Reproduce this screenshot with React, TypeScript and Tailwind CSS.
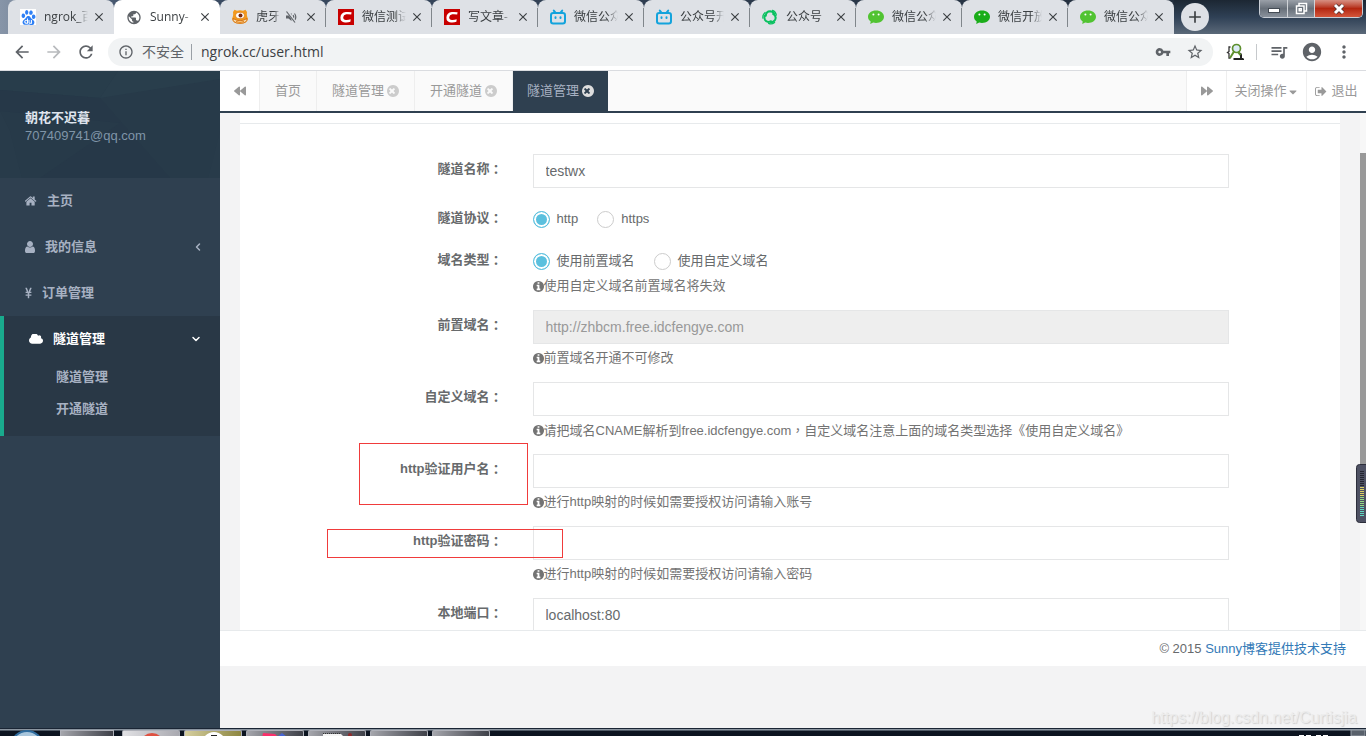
import { useState, type ReactNode } from 'react';
import {
  MdArrowBack,
  MdArrowForward,
  MdRefresh,
  MdInfoOutline,
  MdVpnKey,
  MdStarBorder,
  MdQueueMusic,
  MdAccountCircle,
  MdMoreVert,
  MdClose,
  MdAdd,
  MdPublic,
} from 'react-icons/md';
import { FaBackward, FaCaretDown, FaForward, FaYenSign } from 'react-icons/fa';
import { ChevronDown, ChevronLeft } from 'lucide-react';
import { SiBaidu } from 'react-icons/si';

/* ---------- icons ---------- */

const HOME =
  'M1408 992v480q0 26-19 45t-45 19h-384v-384h-256v384h-384q-26 0-45-19t-19-45v-480q0-1 .5-3t.5-3l575-474 575 474q1 2 1 6zm223-69l-62 74q-8 9-21 11h-3q-13 0-21-7l-692-577-692 577q-12 8-24 7-13-2-21-11l-62-74q-8-10-7-23.5t11-21.5l719-599q32-26 76-26t76 26l244 204v-195q0-14 9-23t23-9h192q14 0 23 9t9 23v408l219 182q10 8 11 21.5t-7 23.5z';
const USER =
  'M1536 1399q0 109-62.5 187t-150.5 78h-854q-88 0-150.5-78t-62.5-187q0-85 8.5-160.5t31.5-152 58.5-131 94-89 134.5-34.5q131 128 313 128t313-128q76 0 134.5 34.5t94 89 58.5 131 31.5 152 8.5 160.5zm-256-887q0 159-112.5 271.5t-271.5 112.5-271.5-112.5-112.5-271.5 112.5-271.5 271.5-112.5 271.5 112.5 112.5 271.5z';
const CLOUD =
  'M1984 1152q0 159-112.5 271.5t-271.5 112.5h-1088q-185 0-316.5-131.5t-131.5-316.5q0-132 71-241.5t187-163.5q-2-28-2-43 0-212 150-362t362-150q158 0 286.5 88t187.5 230q70-62 166-62 106 0 181 75t75 181q0 75-41 138 129 30 213 134.5t84 239.5z';
const INFO =
  'M1152 1376v-160q0-14-9-23t-23-9h-96v-512q0-14-9-23t-23-9h-320q-14 0-23 9t-9 23v160q0 14 9 23t23 9h96v320h-96q-14 0-23 9t-9 23v160q0 14 9 23t23 9h448q14 0 23-9t9-23zm-128-896v-160q0-14-9-23t-23-9h-192q-14 0-23 9t-9 23v160q0 14 9 23t23 9h192q14 0 23-9t9-23zm640 416q0 209-103 385.5t-279.5 279.5-385.5 103-385.5-103-279.5-279.5-103-385.5 103-385.5 279.5-279.5 385.5-103 385.5 103 279.5 279.5 103 385.5z';
const SIGN_OUT =
  'M704 1440q0 4 1 20t.5 26.5-3 23.5-10 19.5-20.5 6.5h-320q-119 0-203.5-84.5t-84.5-203.5v-704q0-119 84.5-203.5t203.5-84.5h320q13 0 22.5 9.5t9.5 22.5q0 4 1 20t.5 26.5-3 23.5-10 19.5-20.5 6.5h-320q-66 0-113 47t-47 113v704q0 66 47 113t113 47h312l11.5 1 11.5 3 8 5.5 7 9 2 13.5zm928-544q0 26-19 45l-544 544q-19 19-45 19t-45-19-19-45v-288h-448q-26 0-45-19t-19-45v-384q0-26 19-45t45-19h448v-288q0-26 19-45t45-19 45 19l544 544q19 19 19 45z';
const TIMES_CIRCLE =
  'M1149 1122q0-26-19-45l-181-181 181-181q19-19 19-45 0-27-19-46l-90-90q-19-19-46-19-26 0-45 19l-181 181-181-181q-19-19-45-19-27 0-46 19l-90 90q-19 19-19 46 0 26 19 45l181 181-181 181q-19 19-19 45 0 27 19 46l90 90q19 19 46 19 26 0 45-19l181-181 181 181q19 19 45 19 27 0 46-19l90-90q19-19 19-46zm515-226q0 209-103 385.5t-279.5 279.5-385.5 103-385.5-103-279.5-279.5-103-385.5 103-385.5 279.5-279.5 385.5-103 385.5 103 279.5 279.5 103 385.5z';

function Glyph({ d, box, className }: { d: string; box: string; className: string }) {
  return (
    <svg viewBox={box} className={className} fill="currentColor" aria-hidden="true">
      <path d={d} />
    </svg>
  );
}

function CsdnIcon() {
  return (
    <svg viewBox="0 0 16 16" className="size-4">
      <rect width="16" height="16" fill="#c80000" />
      <path d="M13.6 3.2 13.2 5.6Q10.500 5 8.200 5.300 5.400 5.800 5.200 8.300 5.200 10.900 8 11 10.500 11.100 12.700 10.300L12.400 12.800Q10 13.600 7 13.400 2.300 12.900 2.400 8.400 2.700 3.600 7.800 3 10.800 2.700 13.600 3.200Z" fill="#fff" />
    </svg>
  );
}

function RobotIcon() {
  return (
    <svg viewBox="0 0 16 16" className="size-4" fill="none" stroke="#13a3dc" strokeWidth="2" strokeLinecap="round">
      <rect x="1" y="4" width="14" height="10.500" rx="2.200" />
      <path d="M3.800 1.600 5.400 3.600M12.200 1.600 10.600 3.600M5.500 8.200v.8M10.500 8.200v.8" />
    </svg>
  );
}

function SwirlIcon() {
  return (
    <svg viewBox="0 0 16 16" className="size-4" fill="none" stroke="#0ac160" strokeWidth="2" strokeLinecap="round">
      {[0, 120, 240].map((angle) => (
        <g key={angle} transform={`rotate(${angle} 8 8)`}>
          <path d="M3.800 6.800Q4 2.200 8.200 2.200 10.800 2.400 12 4.600" />
          <path d="M10.500 1.300Q13.800 2.600 14.300 6" strokeWidth="1.300" />
        </g>
      ))}
    </svg>
  );
}

function ChatIcon({ color }: { color: string }) {
  return (
    <svg viewBox="0 0 16 16" className="size-4">
      <path d="M8 1.500c4.500 0 8 2.700 8 6.200s-3.500 6.200-8 6.200c-1 0-1.900-.1-2.800-.4L2.200 15l.5-2.500C1 11.300 0 9.600 0 7.700 0 4.200 3.500 1.500 8 1.500Z" fill={color} />
      <circle cx="5.400" cy="5.600" r="1" fill="#fff" />
      <circle cx="10.600" cy="5.600" r="1" fill="#fff" />
    </svg>
  );
}

function TigerIcon() {
  return (
    <svg viewBox="0 0 16 16" className="size-4">
      <path d="M1 3 2.500.8 5 1.800Q8 .8 11 1.800L13.500.8 15 3Q14.600 5 15 7L16 10Q15 14.800 8 15 1 14.800 0 10L1 7Q1.400 5 1 3Z" fill="#f39a1e" />
      <path d="M1 9.500q7 4.500 14 0 .3 4.700-7 4.700T1 9.500Z" fill="#fbe3b4" stroke="#c9650f" strokeWidth=".8" />
      <ellipse cx="8" cy="6.500" rx="4.400" ry="3.200" fill="#fff" stroke="#d9780f" strokeWidth=".7" />
      <circle cx="8.500" cy="6.400" r="2" fill="#7a2a10" />
      <path d="M4 12.500q4 1.800 8 0" stroke="#e8820f" fill="none" />
    </svg>
  );
}

function MutedIcon() {
  return (
    <svg viewBox="0 0 12 12" className="ml-[5px] size-3 shrink-0" fill="none" stroke="#5f6368" strokeWidth="1.200">
      <path d="M1 4.500h2.500L6.500 2v8L3.500 7.500H1z" fill="#5f6368" stroke="none" />
      <path d="M8 4.200q1.400 1.800 0 3.600M9.500 2.500q2.600 3.500 0 7" />
      <path d="M2.500.500 10.500 11.500" stroke="#dee1e6" strokeWidth="2.400" />
      <path d="M1.500.500 10 11.500" />
    </svg>
  );
}

function BaiduIcon() {
  return (
    <span className="flex size-4 items-center justify-center bg-white text-[#2f80f5]">
      <SiBaidu className="size-[15px]" />
    </span>
  );
}

/* ---------- browser chrome ---------- */

type BrowserTab = { title: string; icon: ReactNode; active?: boolean; muted?: boolean };

const browserTabs: BrowserTab[] = [
  { title: 'ngrok_百', icon: <BaiduIcon /> },
  { title: 'Sunny-', icon: <MdPublic className="size-[17px] text-[#5f6368]" />, active: true },
  { title: '虎牙', icon: <TigerIcon />, muted: true },
  { title: '微信测试', icon: <CsdnIcon /> },
  { title: '写文章-', icon: <CsdnIcon /> },
  { title: '微信公众', icon: <RobotIcon /> },
  { title: '公众号开', icon: <RobotIcon /> },
  { title: '公众号', icon: <SwirlIcon /> },
  { title: '微信公众', icon: <ChatIcon color="#51c332" /> },
  { title: '微信开放', icon: <ChatIcon color="#1aad19" /> },
  { title: '微信公众', icon: <ChatIcon color="#51c332" /> },
];

function TabStrip() {
  return (
    <div className="relative flex h-[34px] shrink-0 bg-linear-to-r from-[#8795a8] via-[#3c4d65] via-10% to-[#1d2835] pl-2">
      {browserTabs.map((tab, i) => (
        <div
          key={i}
          className={
            "relative flex w-[106px] shrink-0 items-center rounded-t-lg pr-2 pl-3 font-['Open_Sans','Noto_Sans_CJK_SC',sans-serif] text-xs text-[#3c4043] " +
            (tab.active ? 'bg-white' : 'bg-[#dee1e6]')
          }
        >
          <span className="flex w-4 shrink-0 justify-center">{tab.icon}</span>
          <span
            className={
              'ml-2 overflow-hidden whitespace-nowrap mask-r-from-75% ' + (tab.muted ? 'w-6' : 'w-[44px]')
            }
          >
            {tab.title}
          </span>
          {tab.muted && <MutedIcon />}
          <button type="button" aria-label="关闭标签页" className="ml-auto">
            <MdClose className="size-[14px] text-[#3c4043]" />
          </button>
          {i > 1 && i < browserTabs.length - 1 && (
            <span className="absolute top-2 right-0 h-[19px] w-px bg-[#80868b]" />
          )}
        </div>
      ))}
      <div className="flex flex-1 bg-linear-to-b from-[#1c2733] via-[#2f4055] to-[#5b6979] pt-[3px] pl-[7px]">
        <button
          type="button"
          aria-label="新标签页"
          className="flex size-7 items-center justify-center rounded-full bg-[#dee1e6]"
        >
          <MdAdd className="size-5 text-[#3c4043]" />
        </button>
      </div>
      <div className="absolute top-0 right-[3px] flex h-[18px] overflow-hidden rounded-b-[5px] border border-t-0 border-[#c9ced6] text-white">
        <button
          type="button"
          aria-label="最小化"
          className="flex w-7 items-end justify-center border-r border-[#d0d3d8] bg-linear-to-b from-[#9aa0a8] via-[#68707a] to-[#8a929c] pb-1"
        >
          <span className="h-[5px] w-3 border border-[#444c55] bg-white" />
        </button>
        <button
          type="button"
          aria-label="还原"
          className="flex w-[27px] items-center justify-center border-r border-[#d0d3d8] bg-linear-to-b from-[#9aa0a8] via-[#68707a] to-[#8a929c]"
        >
          <svg viewBox="0 0 13 13" className="size-[13px]" fill="#68707a" stroke="#fff" strokeWidth="1.500">
            <path d="M4 1.500h7.500V9H4z" />
            <path d="M1.500 4H9v7.500H1.500zM4.200 6.700h2v2h-2z" />
          </svg>
        </button>
        <button
          type="button"
          aria-label="关闭"
          className="flex w-[47px] items-center justify-center bg-linear-to-b from-[#d68f82] via-[#b3260f] to-[#d4553a]"
        >
          <svg viewBox="0 0 14 12" className="h-3 w-[14px]" fill="none">
            <path d="m3 2 8 8M11 2l-8 8" stroke="#4c3030" strokeWidth="4.500" />
            <path d="m3 2 8 8M11 2l-8 8" stroke="#fff" strokeWidth="3" />
          </svg>
        </button>
      </div>
    </div>
  );
}

function Toolbar() {
  return (
    <div className="flex h-[37px] shrink-0 items-center border-b border-[#dadce0] bg-white pr-3 pl-3 text-[#5f6368]">
      <button type="button" aria-label="后退" className="w-5">
        <MdArrowBack className="size-5" />
      </button>
      <button type="button" aria-label="前进" className="ml-3 w-5 text-[#b8babd]">
        <MdArrowForward className="size-5" />
      </button>
      <button type="button" aria-label="重新加载" className="ml-3 w-5">
        <MdRefresh className="size-5" />
      </button>
      <div className="ml-3 flex h-7 flex-1 items-center rounded-full bg-[#f1f3f4] pr-[9px] pl-[10px]">
        <MdInfoOutline className="size-4" />
        <span className="ml-2 text-sm whitespace-nowrap">不安全</span>
        <span className="mx-[7px] h-4 w-px bg-[#9aa0a6]" />
        <input
          aria-label="地址栏"
          defaultValue="ngrok.cc/user.html"
          className="min-w-0 flex-1 bg-transparent pl-[2px] font-['Open_Sans',sans-serif] text-sm text-[#3c4043] outline-none"
        />
        <MdVpnKey className="size-4" />
        <MdStarBorder className="ml-[15px] size-[18px]" />
      </div>
      <svg viewBox="0 0 18 18" className="ml-[13px] size-[18px]" fill="none">
        <path d="M4.500 4H3v4.500L1.500 9.500 3 10.500V15h1.500" stroke="#333" strokeWidth="1.300" />
        <path d="M13 10.500q2 0 2 1.800V15l1.500 1H7.500" stroke="#222" strokeWidth="2" />
        <circle cx="10.500" cy="5.500" r="4" fill="#dcebf7" stroke="#5d8f2d" strokeWidth="1.700" />
        <path d="m8 8.500-4 6.500M12 9l2.500 3" stroke="#5d8f2d" strokeWidth="2" />
      </svg>
      <span className="ml-3 h-4 w-px bg-[#c6c9cc]" />
      <MdQueueMusic className="ml-[12px] size-5" />
      <MdAccountCircle className="ml-[12px] size-[22px]" />
      <button type="button" aria-label="更多" className="ml-[11px]">
        <MdMoreVert className="size-5" />
      </button>
    </div>
  );
}

/* ---------- sidebar ---------- */

const menuRow = 'flex h-[46px] items-center gap-[10px] pr-4 pb-px pl-[25px] hover:text-white';

function Sidebar() {
  return (
    <aside className="flex w-[220px] shrink-0 flex-col bg-[#2f4050] font-semibold text-[#a7b1c2]">
      <div className="relative bg-[#273a49] pt-[38px] pb-[33px] pl-[25px] leading-[18px]">
        <svg viewBox="0 0 220 107" preserveAspectRatio="none" className="absolute inset-0 size-full" aria-hidden="true">
          <path d="M0 19 100 27 118 0H0z" fill="#283d4b" />
          <path d="M118 0 100 27 220 8V0z" fill="#293e4c" />
          <path d="M0 19 100 27 170 107H40L120 52 0 40z" fill="#263848" />
          <path d="M0 40 10 60 22 107H0zM220 60 208 107h12z" fill="#283b4a" />
        </svg>
        <div className="relative">
          <p className="font-bold text-[#dfe4ed]">朝花不迟暮</p>
          <p className="font-normal text-[#8095a8]">707409741@qq.com</p>
        </div>
      </div>
      <nav>
        <a href="#home" className={menuRow}>
          <Glyph d={HOME} box="64 0 1664 1792" className="h-[14px] w-3" />
          主页
        </a>
        <a href="#profile" className={menuRow}>
          <Glyph d={USER} box="256 128 1280 1536" className="h-3 w-[10px]" />
          我的信息
          <ChevronLeft className="ml-auto size-3" strokeWidth={3} />
        </a>
        <a href="#orders" className={menuRow}>
          <FaYenSign className="h-3 w-[7px]" preserveAspectRatio="none" />
          订单管理
        </a>
        <div className="border-l-4 border-[#19aa8d] bg-[#293846] pb-[11px]">
          <a href="#tunnels" className="flex h-[45px] items-center gap-[10px] pr-[18px] pl-[25px] text-white">
            <Glyph d={CLOUD} box="64 256 1920 1280" className="h-[10px] w-[14px]" />
            隧道管理
            <ChevronDown className="ml-auto size-3" strokeWidth={3} />
          </a>
          <a href="#tunnel-list" className="flex h-8 items-center pl-[52px]">
            隧道管理
          </a>
          <a href="#tunnel-new" className="flex h-8 items-center pl-[52px]">
            开通隧道
          </a>
        </div>
      </nav>
    </aside>
  );
}

/* ---------- page tabs ---------- */

const pageTabs = [
  { title: '首页', closable: false, active: false },
  { title: '隧道管理', closable: true, active: false },
  { title: '开通隧道', closable: true, active: false },
  { title: '隧道管理', closable: true, active: true },
];

function PageTabs() {
  return (
    <div className="flex h-[42px] shrink-0 border-b-2 border-[#2f4050] bg-[#fafafa] text-[#999]">
      <button type="button" aria-label="向左滚动" className="flex w-10 items-center justify-center border-r border-[#eee] bg-white">
        <FaBackward className="size-3" />
      </button>
      {pageTabs.map((tab, i) => (
        <div
          key={i}
          className={
            'flex items-center pb-px whitespace-nowrap ' +
            (tab.active ? 'bg-[#2f4050] px-[14px] text-[#a7b1c2]' : 'border-r border-[#eee] px-[15px]')
          }
        >
          <a href="#tab">{tab.title}</a>
          {tab.closable && (
            <button type="button" aria-label="关闭" className={tab.active ? 'ml-[3px] text-[#ddd]' : 'ml-[3px] text-[#ccc]'}>
              <Glyph d={TIMES_CIRCLE} box="128 128 1536 1536" className="size-3" />
            </button>
          )}
        </div>
      ))}
      <div className="ml-auto flex bg-white">
        <button type="button" aria-label="向右滚动" className="flex w-10 items-center justify-center border-l border-[#eee]">
          <FaForward className="size-3" />
        </button>
        <button type="button" className="flex w-20 items-center justify-center border-l border-[#eee]">
          关闭操作
          <FaCaretDown className="mt-[2px] size-3" />
        </button>
        <button type="button" className="flex w-[60px] items-center justify-center gap-1 border-l border-[#eee]">
          <Glyph d={SIGN_OUT} box="64 0 1664 1792" className="h-[13px] w-3" />
          退出
        </button>
      </div>
    </div>
  );
}

/* ---------- form ---------- */

const control =
  'block h-[34px] w-full border border-[#e5e6e7] bg-white px-3 text-sm text-[#676a6c] outline-none focus:border-[#1ab394] disabled:bg-[#eee] disabled:text-[#999]';

function Mark({ children }: { children: string }) {
  return <span className="font-['Noto_Sans_CJK_TC',sans-serif]">{children}</span>;
}

function Row({ label, htmlFor, mark, children }: { label: string; htmlFor?: string; mark?: ReactNode; children: ReactNode }) {
  return (
    <div className="grid grid-cols-12">
      <div className="relative col-span-3 pt-[6px] pr-[15px] text-right font-bold">
        <label htmlFor={htmlFor} className="flex h-[18px] items-center justify-end">
          {label}
          <Mark>：</Mark>
        </label>
        {mark}
      </div>
      <div className="col-span-8 px-[15px]">{children}</div>
    </div>
  );
}

function Hint({ children }: { children: ReactNode }) {
  return (
    <p className="mt-[5px] flex h-[18px] items-center text-[#737373]">
      <Glyph d={INFO} box="128 128 1536 1536" className="size-[11px] shrink-0" />
      <span>{children}</span>
    </p>
  );
}

function Radios({ name, options }: { name: string; options: string[] }) {
  const [value, setValue] = useState(options[0]);
  return (
    <div className="flex h-[27px] items-center gap-[19px] pt-[5px]">
      {options.map((option) => (
        <label key={option} className="flex items-center gap-[7px]">
          <input
            type="radio"
            name={name}
            checked={value === option}
            onChange={() => setValue(option)}
            className="size-[17px] appearance-none rounded-full border border-[#ccc] bg-white checked:border-[#5bc0de] checked:bg-[#5bc0de] checked:shadow-[inset_0_0_0_2px_white]"
          />
          {option}
        </label>
      ))}
    </div>
  );
}

function TunnelForm() {
  return (
    <form className="mt-[10px] flex flex-col gap-[15px] border-t border-[#e7eaec] px-[5px] pt-[30px] leading-[18px]">
      <Row label="隧道名称" htmlFor="name">
        <input id="name" defaultValue="testwx" className={control} />
      </Row>
      <Row label="隧道协议">
        <Radios name="protocol" options={['http', 'https']} />
      </Row>
      <Row label="域名类型">
        <Radios name="domain-type" options={['使用前置域名', '使用自定义域名']} />
        <Hint>使用自定义域名前置域名将失效</Hint>
      </Row>
      <Row label="前置域名" htmlFor="prefix">
        <input id="prefix" disabled defaultValue="http://zhbcm.free.idcfengye.com" className={control} />
        <Hint>前置域名开通不可修改</Hint>
      </Row>
      <Row label="自定义域名" htmlFor="custom">
        <input id="custom" className={control} />
        <Hint>
          请把域名CNAME解析到free.idcfengye.com<Mark>，</Mark>自定义域名注意上面的域名类型选择《使用自定义域名》
        </Hint>
      </Row>
      <Row
        label="http验证用户名"
        htmlFor="auth-user"
        mark={<span className="absolute top-[-11px] right-[-10px] z-10 h-[62px] w-[169px] border border-[#f03b3b]" />}
      >
        <input id="auth-user" className={control} />
        <Hint>进行http映射的时候如需要授权访问请输入账号</Hint>
      </Row>
      <Row
        label="http验证密码"
        htmlFor="auth-pass"
        mark={<span className="absolute top-[3px] right-[-45px] z-10 h-[29px] w-[236px] border border-[#f03b3b]" />}
      >
        <input id="auth-pass" className={control} />
        <Hint>进行http映射的时候如需要授权访问请输入密码</Hint>
      </Row>
      <Row label="本地端口" htmlFor="port">
        <input id="port" defaultValue="localhost:80" className={control} />
      </Row>
    </form>
  );
}

/* ---------- desktop edge ---------- */

function LevelWidget() {
  return (
    <svg viewBox="0 0 10 59" className="absolute top-[464px] right-0 z-20 h-[59px] w-[10px]" aria-hidden="true">
      <rect x=".5" y=".5" width="14" height="58" rx="3" fill="#4e5163" stroke="#2c2e3b" />
      {Array.from({ length: 23 }, (_, i) => (
        <rect
          key={i}
          x="4"
          y={7 + i * 2}
          width="4"
          height="1"
          fill={i < 8 ? '#23252f' : i < 13 ? '#d9cf62' : i < 18 ? '#93d884' : '#5fd6c0'}
        />
      ))}
    </svg>
  );
}

const taskButton = 'w-[58px] overflow-hidden rounded-t-[2px] border border-b-0 border-[#aeb0b8] ';

function Taskbar() {
  return (
    <div className="flex h-2 shrink-0 gap-1 overflow-hidden border-t border-[#1a2534] bg-linear-to-b from-[#8b95a0] from-15% to-[#0c1420] to-30% pt-px pl-[13px]">
      <svg viewBox="0 0 28 7" className="mr-[15px] h-[7px] w-7">
        <ellipse cx="14" cy="15" rx="15" ry="14" fill="#a9c6dc" stroke="#2f6c9e" strokeWidth="2" />
      </svg>
      <div className="mr-1 w-[54px] overflow-hidden border-t border-r border-l border-[#aeb0b8] bg-linear-to-r from-[#a5a6ac] to-[#3f4149]">
        <svg viewBox="0 0 54 6" className="h-[6px] w-[54px]">
          <path d="M12 5h15v2H12z" fill="#d9c46a" />
        </svg>
      </div>
      <div className={taskButton + 'bg-linear-to-r from-[#e1e1e4] to-[#a9a9b0]'}>
        <svg viewBox="0 0 58 6" className="h-[6px] w-[58px]">
          <circle cx="29" cy="14" r="12" fill="#df5141" />
        </svg>
      </div>
      <div className={taskButton + 'bg-linear-to-r from-[#d6cf9f] to-[#8d8640]'}>
        <svg viewBox="0 0 58 6" className="h-[6px] w-[58px]">
          <circle cx="29" cy="13" r="12" fill="#fff" />
          <path d="M26 4h6v2h-6z" fill="#222" />
        </svg>
      </div>
      <div className={taskButton + 'bg-linear-to-r from-[#a5a6ac] to-[#3f4149]'}>
        <svg viewBox="0 0 58 6" className="h-[6px] w-[58px]">
          <path d="m16 2 12 1 4 4H15z" fill="#fb2f6a" />
          <path d="m30 6 5-4 5 4z" fill="#4765d6" />
        </svg>
      </div>
      <div className={taskButton + 'bg-linear-to-r from-[#a5a6ac] to-[#3f4149]'}>
        <svg viewBox="0 0 58 6" className="h-[6px] w-[58px]">
          <path d="M14 3h18l4 4H14z" fill="#f4f4f4" />
          <path d="M14 2.500h18" stroke="#333" strokeDasharray="1 1" />
          <circle cx="41" cy="4" r="2" fill="#8e2b2b" />
        </svg>
      </div>
      <div className={taskButton + 'bg-linear-to-r from-[#a5a6ac] to-[#3f4149]'} />
      <div className={taskButton + 'bg-linear-to-r from-[#a5a6ac] to-[#3f4149]'} />
      <svg viewBox="0 0 68 6" className="ml-auto h-[6px] w-[68px]">
        <path d="M1 5h5v1H1zM8 5h5v1H8zM18 5h5v1h-5zM25 5h5v1h-5z" fill="#fff" />
        <path d="M53 0h14v6H53z" fill="#59616b" stroke="#9aa1aa" />
      </svg>
    </div>
  );
}

export default function App() {
  return (
    <div className="relative flex h-screen flex-col overflow-hidden bg-[#f3f3f4] font-['Liberation_Sans','Noto_Sans_CJK_SC',sans-serif] text-[13px] text-[#676a6c]">
      <TabStrip />
      <Toolbar />
      <div className="flex min-h-0 flex-1">
        <Sidebar />
        <main className="relative flex min-w-0 flex-1 flex-col pb-[62px]">
          <PageTabs />
          <div className="flex min-h-0 flex-1 overflow-hidden pl-5">
            <section className="min-w-0 flex-1 overflow-hidden bg-white">
              <TunnelForm />
            </section>
            <div className="ml-5 w-[6px] shrink-0 bg-[#f7f7f7] pt-10">
              <div className="h-[340px] bg-[#999]" />
            </div>
          </div>
          <footer className="flex h-9 shrink-0 items-center justify-end border-t border-[#e7eaec] bg-white pt-px pr-5">
            <p>
              © 2015{' '}
              <a href="#sunny" className="text-[#337ab7]">
                Sunny博客提供技术支持
              </a>
            </p>
          </footer>
          <p className="absolute right-[9px] bottom-0 text-base leading-5 text-[#ececec] [text-shadow:1px_1px_1px_#d0d0d0]">
            https://blog.csdn.net/Curtisjia
          </p>
        </main>
      </div>
      <Taskbar />
      <LevelWidget />
    </div>
  );
}
